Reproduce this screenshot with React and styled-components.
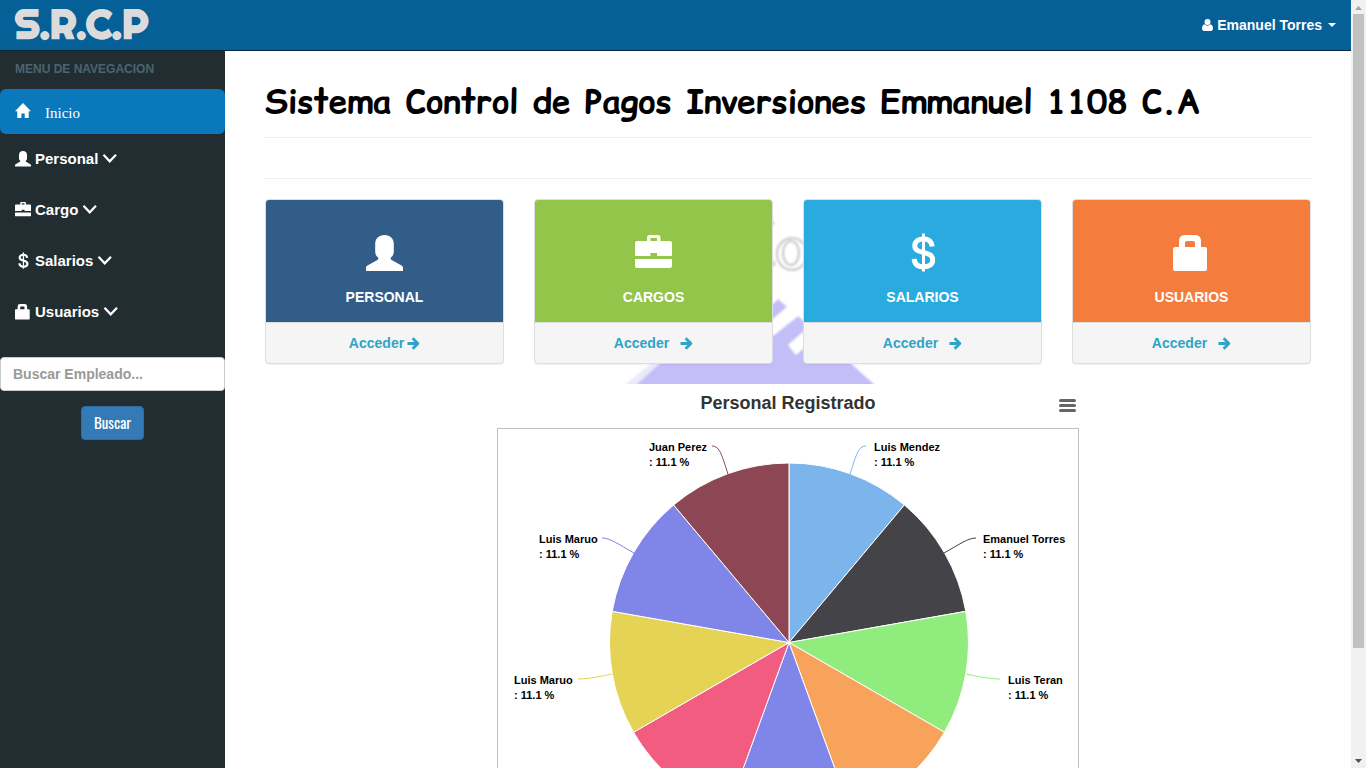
import React from "react";
import styled, { createGlobalStyle } from "styled-components";

const GlobalStyle = createGlobalStyle`
  *, *::before, *::after { box-sizing: border-box; }
  body {
    margin: 0;
    background: #fff;
    color: #333;
    font: bold 14px/20px "Liberation Sans", Arial, sans-serif;
  }
`;

const Page = styled.div`
  display: grid;
  grid-template-columns: 1fr 15px;
  height: 100vh;
  overflow: hidden;
`;

const Shell = styled.div`
  display: flex;
  flex-direction: column;
  min-width: 0;
  min-height: 0;
`;

const TopBar = styled.header`
  display: flex;
  align-items: center;
  justify-content: space-between;
  flex: none;
  height: 51px;
  padding: 0 15px;
  background: #056098;
  border-bottom: 1px solid #06263b;
`;

const Brand = styled.a`
  padding-bottom: 2px;
  color: #dbdbdb;
  font: bold 40px/48px Righteous, Lato, sans-serif;
  text-decoration: none;
  -webkit-text-stroke: 1px #dbdbdb;
`;

const UserButton = styled.button`
  display: flex;
  align-items: center;
  gap: 4px;
  padding: 0;
  border: 0;
  background: none;
  color: #fff;
  font: inherit;
`;

const Caret = styled.span`
  margin-left: 2px;
  border-top: 4px solid #fff;
  border-left: 4px solid transparent;
  border-right: 4px solid transparent;
`;

const Body = styled.div`
  display: flex;
  flex: 1;
  min-height: 0;
`;

const Sidebar = styled.aside`
  flex: none;
  width: 225px;
  background: #222d32;
`;

const MenuHeading = styled.h2`
  margin: 0;
  padding: 0 15px 2px;
  color: #4b646f;
  font-size: 12px;
  line-height: 36px;
`;

const MenuList = styled.ul`
  margin: 0 0 21px;
  padding: 0;
  list-style: none;
`;

const HomeLink = styled.a`
  display: flex;
  align-items: center;
  gap: 14px;
  height: 45px;
  padding: 2px 15px 0;
  border-radius: 6px;
  background: #0a79bb;
  color: #fff;
  font: 15px/20px "Liberation Serif", "Times New Roman", serif;
  text-decoration: none;
`;

const MenuLink = styled.a`
  display: flex;
  align-items: center;
  gap: 4px;
  height: 49px;
  margin-bottom: 2px;
  padding: 0 15px;
  color: #fff;
  font-size: 15px;
  text-decoration: none;
`;

const Search = styled.form`
  display: flex;
  flex-direction: column;
  align-items: center;
  gap: 15px;
`;

const SearchInput = styled.input`
  width: 100%;
  height: 34px;
  padding: 6px 12px;
  border: 1px solid #ccc;
  border-radius: 4px;
  background: #fff;
  font: inherit;
  &::placeholder { color: #999; opacity: 1; }
`;

const SearchButton = styled.button`
  height: 34px;
  padding: 0 12px 2px;
  border: 1px solid #2e6da4;
  border-radius: 4px;
  background: #337ab7;
  color: #fff;
  font: 400 15px/20px Oswald, "Liberation Sans Narrow", "Liberation Sans", sans-serif;
`;

const Content = styled.main`
  flex: 1;
  min-width: 0;
  padding: 0 40px;
  overflow: hidden;
`;

const Title = styled.h1`
  margin: 0;
  padding: 28px 0 14px;
  color: #000;
  font: bold 33px/44px "Comic Relief", "Comic Sans MS", "Comic Neue", sans-serif;
  white-space: nowrap;
`;

const Rule = styled.hr`
  height: 1px;
  margin: 0;
  border: 0;
  background: #eee;
  & + & { margin-top: 40px; }
`;

const Overview = styled.section`
  position: relative;
  margin-top: 20px;
  padding-bottom: 20px;
`;

const Watermark = styled.svg`
  position: absolute;
  top: 0;
  left: 50%;
  transform: translateX(-50%);
  width: 340px;
  height: 185px;
`;

const Cards = styled.div`
  position: relative;
  display: grid;
  grid-template-columns: repeat(4, 1fr);
  gap: 30px;
`;

const Card = styled.article`
  border: 1px solid #ddd;
  border-radius: 4px;
  overflow: hidden;
  background: #f5f5f5;
  box-shadow: 0 1px 1px rgba(0, 0, 0, 0.05);
`;

const CardTop = styled.div`
  display: flex;
  flex-direction: column;
  align-items: center;
  gap: 15px;
  padding: 35px 15px 15px;
  background: ${(p) => p.$color};
  color: #fff;
`;

const CardName = styled.h3`
  margin: 0;
  font-size: 14px;
  line-height: 20px;
`;

const CardLink = styled.a`
  display: flex;
  align-items: center;
  justify-content: center;
  gap: ${(p) => (p.$tight ? "3px" : "11px")};
  height: 41px;
  border-top: 1px solid #ddd;
  color: #2fa4c7;
  text-decoration: none;
`;

const ChartPanel = styled.section`
  width: 582px;
  margin: 0 auto;
`;

const ChartHeader = styled.header`
  display: grid;
  grid-template-columns: 1fr auto 1fr;
  align-items: center;
  height: 44px;
  padding-bottom: 6px;
`;

const ChartTitle = styled.h2`
  grid-column: 2;
  margin: 0;
  font-size: 18px;
  line-height: 22px;
`;

const ChartMenu = styled.button`
  display: flex;
  justify-self: end;
  padding: 4px 3px 0 0;
  border: 0;
  background: none;
`;

const Plot = styled.svg`
  display: block;
  border: 1px solid #c0c0c0;
  text {
    font: bold 11px "Liberation Sans", Arial, sans-serif;
    fill: #000;
  }
`;

const ScrollTrack = styled.div`
  display: flex;
  flex-direction: column;
  align-items: center;
  background: #f1f1f1;
`;

const ScrollThumb = styled.div`
  flex: 634;
  width: 11px;
  background: #c1c1c1;
`;

const ScrollRest = styled.div`
  flex: 106;
`;

const UserGlyph = ({ size = 16 }) => (
  <svg width={size} height={size} viewBox="0 0 37 37" fill="currentColor" aria-hidden="true">
    <path d="M18.500 0c5.600 0 9.300 3.600 9.300 9v7c0 3-.8 5-3 6.500v2l10.700 6c1 .6 1.500 1.400 1.500 2.500v3H0v-3c0-1.100.5-1.900 1.500-2.500l10.700-6v-2c-2.200-1.500-3-3.500-3-6.500V9c0-5.400 3.700-9 9.300-9z" />
  </svg>
);

const CaseGlyph = ({ size = 16 }) => (
  <svg width={size} height={size} viewBox="0 0 37 37" fill="currentColor" aria-hidden="true">
    <path
      fillRule="evenodd"
      d="M14.500 0h8.500a2.500 2.500 0 0 1 2.500 2.500V6H35a2 2 0 0 1 2 2v13H22v-3h-6.500v3H0V8a2 2 0 0 1 2-2h10V2.500A2.500 2.500 0 0 1 14.500 0zM15.500 3v3H22V3zM0 24h37v7a2 2 0 0 1-2 2H2a2 2 0 0 1-2-2z"
    />
  </svg>
);

const DollarGlyph = ({ size = 16 }) => (
  <svg width={size} height={size} viewBox="0 0 37 37" fill="none" stroke="currentColor" overflow="visible" aria-hidden="true">
    <path d="M19.500 -1.500v38" strokeWidth="3" />
    <path
      d="M28.200 11.500C27.700 6.500 24.500 4 19.500 4c-5.200 0-8.700 2.600-8.700 6.700 0 4.300 3.200 5.500 8.700 6.800 6 1.400 9.200 3 9.200 7.500 0 4.400-3.400 6.800-9.200 6.800-5.700 0-9-2.800-9.300-8"
      strokeWidth="5"
    />
  </svg>
);

const LockGlyph = ({ size = 16 }) => (
  <svg width={size} height={size} viewBox="0 0 37 37" fill="currentColor" aria-hidden="true">
    <path
      fillRule="evenodd"
      d="M11.500 0h11a5.500 5.500 0 0 1 5.500 5.500V12h4a2 2 0 0 1 2 2v20a2 2 0 0 1-2 2H2a2 2 0 0 1-2-2V14a2 2 0 0 1 2-2h4V5.500A5.500 5.500 0 0 1 11.500 0zM14 6a2 2 0 0 0-2 2v4h10V8a2 2 0 0 0-2-2z"
    />
  </svg>
);

const HomeGlyph = () => (
  <svg width="16" height="20" viewBox="0 0 16 20" fill="currentColor" aria-hidden="true">
    <path d="M8 0l8 8.300h-2.300V15H9.700v-4.500H6.400V15H2.300V8.300H0z" />
  </svg>
);

const ChevronGlyph = () => (
  <svg width="15" height="15" viewBox="0 0 15 15" fill="none" stroke="currentColor" strokeWidth="2.200" aria-hidden="true">
    <path d="M1.500 3.700l6.200 6.600L14 3.700" />
  </svg>
);

const PersonGlyph = () => (
  <svg width="11" height="12" viewBox="0 0 11 12" fill="currentColor" aria-hidden="true">
    <circle cx="5.500" cy="3" r="3" />
    <path d="M2.500 5.300C1 5.700 0 7.300 0 9.600 0 11 .9 12 2.200 12h6.600C10.100 12 11 11 11 9.600c0-2.300-1-3.900-2.500-4.300a4.300 4.300 0 0 1-6 0z" />
  </svg>
);

const ArrowGlyph = () => (
  <svg width="13" height="13" viewBox="0 0 13 13" fill="none" stroke="currentColor" strokeLinejoin="round" aria-hidden="true">
    <path d="M.500 6.500h10" strokeWidth="3" />
    <path d="M5.600 1.200l5.300 5.300-5.300 5.300" strokeWidth="2.800" />
  </svg>
);

const MENU = [
  { label: "Personal", Glyph: UserGlyph },
  { label: "Cargo", Glyph: CaseGlyph },
  { label: "Salarios", Glyph: DollarGlyph },
  { label: "Usuarios", Glyph: LockGlyph },
];

const CARDS = [
  { name: "PERSONAL", color: "#325d88", Glyph: UserGlyph, tight: true },
  { name: "CARGOS", color: "#93c54b", Glyph: CaseGlyph },
  { name: "SALARIOS", color: "#29abe0", Glyph: DollarGlyph },
  { name: "USUARIOS", color: "#f47c3c", Glyph: LockGlyph },
];

const COLORS = ["#7cb5ec", "#434348", "#90ed7d", "#f7a35c", "#8085e9", "#f15c80", "#e4d354", "#8085e8", "#8d4653"];

const LABELS = [
  { name: "Luis Mendez", x: 376, y: 22, line: "M368 17C360 17 358 27 352 45", color: COLORS[0] },
  { name: "Emanuel Torres", x: 485, y: 114, line: "M478 109C470 109 462 115 446 124", color: COLORS[1] },
  { name: "Luis Teran", x: 510, y: 255, line: "M502 250C496 250 486 249 468 245", color: COLORS[2] },
  { name: "Luis Maruo", x: 16, y: 255, line: "M80 250C86 250 96 249 114 245", color: COLORS[6] },
  { name: "Luis Maruo", x: 41, y: 114, line: "M104 109C112 109 120 115 136 124", color: COLORS[7] },
  { name: "Juan Perez", x: 151, y: 22, line: "M214 17C222 17 224 27 230 45", color: COLORS[8] },
];

const CX = 291;
const CY = 213.5;
const R = 179.5;

const rim = (i) => {
  const a = (i * 2 * Math.PI) / COLORS.length;
  return `${CX + R * Math.sin(a)} ${CY - R * Math.cos(a)}`;
};

const PieChart = () => (
  <Plot width="582" height="428" viewBox="0 0 580 426" role="img" aria-label="Personal Registrado">
    {COLORS.map((color, i) => (
      <path
        key={i}
        d={`M${CX} ${CY}L${rim(i)}A${R} ${R} 0 0 1 ${rim(i + 1)}Z`}
        fill={color}
        stroke="#fff"
        strokeLinejoin="round"
      />
    ))}
    {LABELS.map((l) => (
      <g key={l.line}>
        <path d={l.line} fill="none" stroke={l.color} />
        <text x={l.x} y={l.y}>{l.name}</text>
        <text x={l.x} y={l.y + 15}>: 11.1 %</text>
      </g>
    ))}
  </Plot>
);

const HouseMark = () => (
  <Watermark viewBox="618 199 340 185" aria-hidden="true">
    <defs>
      <filter id="soft">
        <feGaussianBlur stdDeviation="0.800" />
      </filter>
    </defs>
    <g filter="url(#soft)">
      <path d="M621 388L665 352H700L640 388z" fill="#ebe9fb" />
      <path d="M633 388L740 290 773 304 778 299 787 307 765 327 773 335 798 316 814 330 878 388z" fill="#c3bdf8" />
      <path d="M762 328L787 307 798 316 773 336z" fill="#fff" />
      <path d="M788 345L812 324 820 334 796 355z" fill="#fff" />
      <g fill="none" stroke="#c8c8c8" strokeWidth="2.200">
        <ellipse cx="792" cy="254" rx="15" ry="16" />
        <ellipse cx="791" cy="253" rx="8" ry="12" />
        <path d="M764 265h10v-4M768 222h5v3" />
      </g>
    </g>
  </Watermark>
);

export default function App() {
  return (
    <Page>
      <GlobalStyle />
      <Shell>
        <TopBar>
          <Brand href="#">S.R.C.P</Brand>
          <UserButton type="button">
            <PersonGlyph />
            Emanuel Torres
            <Caret />
          </UserButton>
        </TopBar>
        <Body>
          <Sidebar>
            <nav>
              <MenuHeading>MENU DE NAVEGACION</MenuHeading>
              <MenuList>
                <li>
                  <HomeLink href="#">
                    <HomeGlyph />
                    Inicio
                  </HomeLink>
                </li>
                {MENU.map(({ label, Glyph }) => (
                  <li key={label}>
                    <MenuLink href="#">
                      <Glyph />
                      {label}
                      <ChevronGlyph />
                    </MenuLink>
                  </li>
                ))}
              </MenuList>
            </nav>
            <Search>
              <SearchInput type="text" placeholder="Buscar Empleado..." aria-label="Buscar Empleado" />
              <SearchButton type="button">Buscar</SearchButton>
            </Search>
          </Sidebar>
          <Content>
            <Title>Sistema Control de Pagos Inversiones Emmanuel 1108 C.A</Title>
            <Rule />
            <Rule />
            <Overview>
              <HouseMark />
              <Cards>
                {CARDS.map(({ name, color, Glyph, tight }) => (
                  <Card key={name}>
                    <CardTop $color={color}>
                      <Glyph size={37} />
                      <CardName>{name}</CardName>
                    </CardTop>
                    <CardLink href="#" $tight={tight}>
                      Acceder
                      <ArrowGlyph />
                    </CardLink>
                  </Card>
                ))}
              </Cards>
            </Overview>
            <ChartPanel>
              <ChartHeader>
                <ChartTitle>Personal Registrado</ChartTitle>
                <ChartMenu type="button" aria-label="Chart menu">
                  <svg width="17" height="13" viewBox="0 0 17 13" stroke="#666" strokeWidth="3" strokeLinecap="round">
                    <path d="M1.500 1.500h14M1.500 6.500h14M1.500 11.500h14" />
                  </svg>
                </ChartMenu>
              </ChartHeader>
              <PieChart />
            </ChartPanel>
          </Content>
        </Body>
      </Shell>
      <ScrollTrack aria-hidden="true">
        <svg width="15" height="14" viewBox="0 0 15 14"><path d="M4 10h7L7.500 6z" fill="#a3a3a3" /></svg>
        <ScrollThumb />
        <ScrollRest />
        <svg width="15" height="14" viewBox="0 0 15 14"><path d="M4 5h7L7.500 9z" fill="#505050" /></svg>
      </ScrollTrack>
    </Page>
  );
}
